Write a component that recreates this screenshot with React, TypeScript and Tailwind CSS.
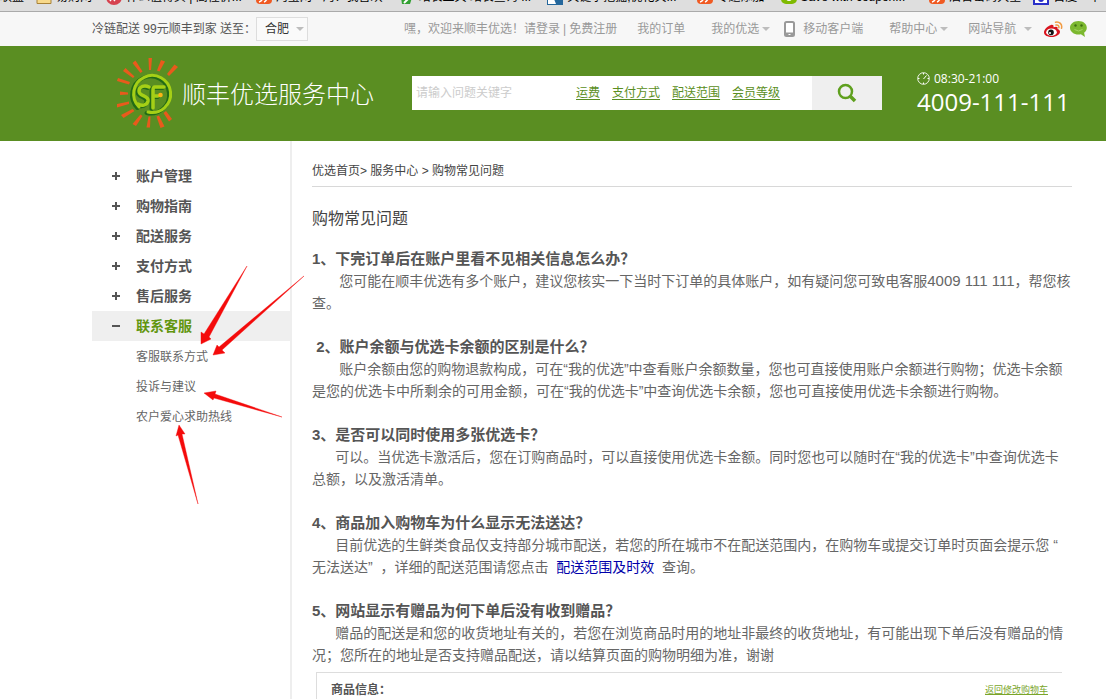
import React, { useState } from "react";

const bookmarks = [
  { label: "联盟", place: "pl-0", icon: "none" },
  { label: "易购网", place: "ml-3", icon: "folder" },
  { label: "什么值得买 | 高性价...", place: "ml-3.5", icon: "red" },
  { label: "淘宝网 - 淘！我喜欢", place: "ml-3.5", icon: "orange" },
  { label: "站长工具 站长查询 ...", place: "ml-4", icon: "green" },
  { label: "关键字挖掘,优化关...", place: "ml-4", icon: "blue" },
  { label: "专题添加", place: "ml-5", icon: "orange" },
  { label: "Save with coupon...", place: "ml-4", icon: "lime" },
  { label: "后台密码大全", place: "ml-6", icon: "orange" },
  { label: "百度一下", place: "ml-3", icon: "navy" },
];

const menu = ["账户管理", "购物指南", "配送服务", "支付方式", "售后服务", "联系客服"];
const contactLinks = ["客服联系方式", "投诉与建议", "农户爱心求助热线"];
const hotLinks = ["运费", "支付方式", "配送范围", "会员等级"];

const nb = "\u00a0";

function BookmarkIcon({ kind }: { kind: string }) {
  if (kind === "none") return null;
  return (
    <svg width="16" height="16" viewBox="0 0 16 16" className="mr-1 shrink-0" aria-hidden="true">
      {kind === "folder" && <path d="M1 3h5l2 2h7v9.500H1z" fill="#f8d98a" stroke="#a88238" />}
      {kind === "red" && (
        <>
          <circle cx="8" cy="8" r="8" fill="#d6424f" />
          <path d="M4 12l5-7M8 12l4-6" stroke="#fff" strokeWidth="1.500" />
        </>
      )}
      {kind === "orange" && (
        <>
          <rect width="16" height="15" rx="4" fill="#f05a22" />
          <path d="M3 13q4-1 4-7M8 13q3-1 4-7" stroke="#fff" strokeWidth="1.500" fill="none" />
        </>
      )}
      {kind === "green" && (
        <>
          <path d="M1 2h14L11 15H3z" fill="#32a032" />
          <path d="M5 14l7-7" stroke="#fff" strokeWidth="2" />
        </>
      )}
      {kind === "blue" && (
        <>
          <rect x="0.500" y="0.500" width="15" height="15" fill="#fff" stroke="#24679c" />
          <path d="M7 10l8-4v9H9z" fill="#24679c" />
        </>
      )}
      {kind === "lime" && (
        <>
          <rect width="16" height="15" rx="5" fill="#7fba00" />
          <circle cx="8" cy="9" r="3" fill="#fff" />
        </>
      )}
      {kind === "navy" && (
        <>
          <rect x="1" y="0" width="14" height="15" fill="#fff" stroke="#2a30c8" strokeWidth="2" />
          <circle cx="8" cy="10" r="3" fill="#2a30c8" />
        </>
      )}
    </svg>
  );
}

function Caret() {
  return (
    <svg width="8" height="4" viewBox="0 0 8 4" className="shrink-0" aria-hidden="true">
      <path d="M0 0h8L4 4z" fill="#bdbdbd" />
    </svg>
  );
}

function WeiboIcon() {
  return (
    <svg width="19" height="17" viewBox="0 0 19 17" aria-hidden="true">
      <path d="M7 4C3.500 5 0 8.500 0 11.500c0 3 4 4.500 7.500 4.500 5 0 8.500-2.700 8.500-5.300 0-1.700-1.300-2.500-2.500-2.800.6-1.900-.6-2.900-4-1.700C9.900 4.200 8.700 3.500 7 4z" fill="#d8141f" />
      <ellipse cx="7.500" cy="11.200" rx="5.300" ry="3.700" fill="#fff" />
      <circle cx="7" cy="11.400" r="2.800" fill="#151515" />
      <circle cx="6" cy="12" r="1" fill="#fff" />
      <path d="M11.500 1.200c4-.8 7 2 6 6M12 4c2-.4 3.200.8 2.900 2.700" fill="none" stroke="#f29b42" strokeWidth="1.500" strokeLinecap="round" />
    </svg>
  );
}

function WechatIcon() {
  return (
    <svg width="17" height="16" viewBox="0 0 17 16" aria-hidden="true">
      <path d="M8.500 0C3.700 0 0 2.900 0 6.800s3.700 6.800 8.500 6.800c.8 0 1.600-.1 2.400-.3L15 16l-.9-4.200c1.700-1.200 2.700-3 2.700-5C16.800 2.900 13.200 0 8.500 0z" fill="#7cb82f" />
      <circle cx="5.500" cy="4.500" r="1.200" fill="#3f6f12" />
      <circle cx="11.500" cy="4.500" r="1.200" fill="#3f6f12" />
      <path d="M4.500 8.500q4 3 8 0" fill="none" stroke="#a5d568" />
    </svg>
  );
}

function SunLogo() {
  return (
    <svg width="64" height="74" viewBox="0 0 64 74" role="img" aria-label="SF" className="shrink-0">
      <g fill="#e95a1c">
        <path d="M32.500 2h3.500l-1 12h-2z" />
        <path d="M45 4l4 1.500-5.500 10-2.500-1z" />
        <path d="M58.500 8.500l3.500 2.500-9 9-2-2z" />
        <path d="M16.500 7l3-2.500 7 11-2 1.500z" />
        <path d="M7 15l2.500-3 9 8.500-1.500 1.500z" />
        <path d="M1 25l1-3 12 4-1 2.500z" />
        <path d="M4 35.500v3.500l8-.5v-2z" />
        <path d="M1 51.500l0-3.500 12-2.500v2.500z" />
        <path d="M5 59l2.500 3 11-7-2-2z" />
        <path d="M16.500 68l3.500 2 6.500-10-2-1.500z" />
        <path d="M30.500 71.500h3.500l.5-11h-2z" />
        <path d="M44.500 72l4-1.500-5.500-11-2.500 1z" />
        <path d="M53 65.500l3-2.500-6-8-2.500 2z" />
      </g>
      <g fill="none" stroke="#236b16" strokeLinecap="round" strokeLinejoin="round" transform="translate(-1.500 1)">
        <path d="M23 51A18.500 18.500 0 1 1 32 56" strokeWidth="4" />
        <path d="M33 31c-4-2-10-1-10 4 0 6 10 4 9 10-1 5-7 5-10 3" strokeWidth="4" />
        <path d="M48 31H39q-2 0-2 3v18M38 40h5" strokeWidth="4" />
      </g>
      <g fill="none" stroke="#a5cf16" strokeLinecap="round" strokeLinejoin="round">
        <path d="M23 51A18.500 18.500 0 1 1 32 56" strokeWidth="3" />
        <path d="M33 31c-4-2-10-1-10 4 0 6 10 4 9 10-1 5-7 5-10 3" strokeWidth="3.500" />
        <path d="M48 31H39q-2 0-2 3v18M38 40h4" strokeWidth="3.500" />
      </g>
      <circle cx="44.500" cy="39" r="2.300" fill="#fbb416" />
    </svg>
  );
}

function Arrows() {
  return (
    <svg width="230" height="250" viewBox="85 260 230 250" className="pointer-events-none absolute left-[85px] top-[260px]" aria-hidden="true">
      <g fill="#f40b0b" stroke="#f40b0b" strokeWidth="0.400">
        <path d="M247 266L209 337L211 339L201 344L201 332L204 334Z" />
        <path d="M304 276L222 350L225 353L213 355L217 345L219 347Z" />
        <path d="M282 417L214 398L213 400L204 393L216 391L215 394Z" />
        <path d="M198 504L182 434L185 434L179 425L176 436L178 435Z" />
      </g>
    </svg>
  );
}

function Faq({ title, children }: { title: string; children: React.ReactNode }) {
  return (
    <section className="mb-[22px] whitespace-nowrap leading-[22px]">
      <h2 className="text-[15px] font-bold text-[#555]">{title}</h2>
      <p className="text-sm leading-[22px] text-[#666]">{children}</p>
    </section>
  );
}

export default function App() {
  const [open, setOpen] = useState("联系客服");
  return (
    <div className="relative h-screen overflow-hidden bg-white font-['Liberation_Sans','Noto_Sans_CJK_SC',sans-serif] text-xs text-[#555]">
      <nav aria-label="书签" className="flex h-3 items-end overflow-hidden whitespace-nowrap border-b border-[#aaa] bg-[#dedede] pb-[6px] text-black">
        {bookmarks.map((b) => (
          <a key={b.label} href="#" className={`flex shrink-0 items-center leading-4 ${b.place}`}>
            <BookmarkIcon kind={b.icon} />
            {b.label}
          </a>
        ))}
      </nav>

      <div className="flex h-[34px] items-center whitespace-nowrap bg-[#f7f7f7] pl-[92px] text-[#999]">
        <label htmlFor="city" className="w-[164px] text-[#555]">冷链配送 99元顺丰到家 送至：</label>
        <div className="relative">
          <select id="city" className="h-6 w-[52px] appearance-none border border-[#ddd] bg-[#fafafa] pl-2 text-xs text-[#333]">
            <option>合肥</option>
          </select>
          <span className="pointer-events-none absolute right-1 top-[10px]"><Caret /></span>
        </div>
        <div className="ml-24 flex items-center">
          <span>嘿，欢迎来顺丰优选！</span>
          <a href="#">请登录</a>
          <span className="px-[3px]">|</span>
          <a href="#">免费注册</a>
        </div>
        <a href="#" className="ml-5">我的订单</a>
        <button className="ml-[26px] flex items-center gap-[3px]">我的优选 <Caret /></button>
        <a href="#" className="ml-[14px] flex items-center gap-2">
          <svg width="11" height="16" viewBox="0 0 11 16" aria-hidden="true">
            <rect x="1" y="1" width="9" height="14" rx="1.500" fill="#fff" stroke="#999" strokeWidth="2" />
            <path d="M1 13h9" stroke="#999" strokeWidth="3" />
            <path d="M4.500 13.500h2" stroke="#fff" />
          </svg>
          移动客户端
        </a>
        <button className="ml-[26px] flex items-center gap-[3px]">帮助中心 <Caret /></button>
        <button className="ml-5 flex items-center gap-2">网站导航 <Caret /></button>
        <a href="#" aria-label="微博" className="ml-3"><WeiboIcon /></a>
        <a href="#" aria-label="微信" className="ml-[7px]"><WechatIcon /></a>
      </div>

      <header className="flex h-[95px] items-center whitespace-nowrap bg-[#5a8e22] pb-[2px] pl-[116px]">
        <SunLogo />
        <h1 className="ml-[2px] w-[230px] pt-1 text-2xl font-light text-white">顺丰优选服务中心</h1>
        <form className="flex h-[34px] w-[470px] bg-white" onSubmit={(e) => e.preventDefault()}>
          <input aria-label="搜索问题" placeholder="请输入问题关键字" className="w-[164px] pl-1 text-xs outline-none placeholder:text-[#ccc]" />
          <div className="flex flex-1 items-center gap-3 text-[#5a8e22]">
            {hotLinks.map((t) => (
              <a key={t} href="#" className="underline underline-offset-2">{t}</a>
            ))}
          </div>
          <button aria-label="搜索" className="flex w-[70px] items-center justify-center bg-[#efefef]">
            <svg width="20" height="20" viewBox="0 0 20 20" aria-hidden="true">
              <circle cx="8.500" cy="8.500" r="6.500" fill="none" stroke="#5fa01e" strokeWidth="2.500" />
              <path d="M13 13l5 5" stroke="#5fa01e" strokeWidth="3.500" />
            </svg>
          </button>
        </form>
        <div className="ml-[35px] pb-[2px] font-['Open_Sans',sans-serif] text-white">
          <div className="flex h-5 items-center gap-1 text-xs">
            <svg width="13" height="13" viewBox="0 0 13 13" fill="none" stroke="#fff" aria-hidden="true">
              <circle cx="6.500" cy="6.500" r="5.800" strokeWidth="0.900" />
              <path d="M9.500 3.500l-3 3.500M6.500 1v1.500M1 6.500h1.500M10.500 6.500H12M6.500 10.500V12" />
            </svg>
            08:30-21:00
          </div>
          <div className="text-2xl leading-[26px]">4009-111-111</div>
        </div>
      </header>

      <div className="flex h-[700px] pl-[92px] pr-[34px]">
        <aside className="w-[200px] shrink-0 border-r-2 border-[#eee] pt-5">
          <ul>
            {menu.map((m) => (
              <li key={m}>
                <button
                  onClick={() => setOpen(m)}
                  className={`flex h-[30px] w-full items-center gap-4 pl-5 text-sm font-bold ${open === m ? "bg-[#efefef] text-[#62960f]" : "text-[#555]"}`}
                >
                  <svg width="8" height="8" viewBox="0 0 8 8" stroke="#555" strokeWidth="2" aria-hidden="true">
                    <path d={open === m ? "M0 4h8" : "M0 4h8M4 0v8"} />
                  </svg>
                  {m}
                </button>
              </li>
            ))}
          </ul>
          <ul className="pl-11 pt-px leading-[30px] text-[#666]">
            {contactLinks.map((t) => (
              <li key={t}><a href="#">{t}</a></li>
            ))}
          </ul>
        </aside>

        <main className="min-w-0 flex-1 pl-5 pt-5">
          <nav aria-label="当前位置" className="h-[26px] border-b border-[#d8d8d8] leading-5 text-[#444]">
            <a href="#">优选首页</a>&gt; <a href="#">服务中心</a> &gt; <a href="#">购物常见问题</a>
          </nav>
          <h2 className="mb-[17px] mt-5 text-base leading-6 text-[#444]">购物常见问题</h2>

          <Faq title="1、下完订单后在账户里看不见相关信息怎么办？">
            {nb.repeat(7)}您可能在顺丰优选有多个账户，建议您核实一下当时下订单的具体账户，如有疑问您可致电客服<span className="text-[15px]">4009 111 111</span>，帮您核<br />
            查。
          </Faq>
          <Faq title={nb + "2、账户余额与优选卡余额的区别是什么？"}>
            {nb.repeat(7)}账户余额由您的购物退款构成，可在“我的优选”中查看账户余额数量，您也可直接使用账户余额进行购物；优选卡余额<br />
            是您的优选卡中所剩余的可用金额，可在“我的优选卡”中查询优选卡余额，您也可直接使用优选卡余额进行购物。
          </Faq>
          <Faq title="3、是否可以同时使用多张优选卡？">
            {nb.repeat(6)}可以。当优选卡激活后，您在订购商品时，可以直接使用优选卡金额。同时您也可以随时在“我的优选卡”中查询优选卡<br />
            总额，以及激活清单。
          </Faq>
          <Faq title="4、商品加入购物车为什么显示无法送达？">
            {nb.repeat(6)}目前优选的生鲜类食品仅支持部分城市配送，若您的所在城市不在配送范围内，在购物车或提交订单时页面会提示您{nb}“<br />
            无法送达”{nb.repeat(2)}，详细的配送范围请您点击{nb.repeat(2)}<a href="#" className="text-[#00a]">配送范围及时效</a>{nb.repeat(2)}查询。
          </Faq>
          <Faq title="5、网站显示有赠品为何下单后没有收到赠品？">
            {nb.repeat(6)}赠品的配送是和您的收货地址有关的，若您在浏览商品时用的地址非最终的收货地址，有可能出现下单后没有赠品的情<br />
            况；您所在的地址是否支持赠品配送，请以结算页面的购物明细为准，谢谢
          </Faq>

          <div className="-mt-4 ml-1 mr-[10px] flex h-20 justify-between border-l border-t border-[#ddd] px-[14px] leading-[34px]">
            <strong>商品信息：</strong>
            <a href="#" className="text-[9px] text-[#7aa52a] underline">返回修改购物车</a>
          </div>
        </main>
      </div>
      <Arrows />
    </div>
  );
}
